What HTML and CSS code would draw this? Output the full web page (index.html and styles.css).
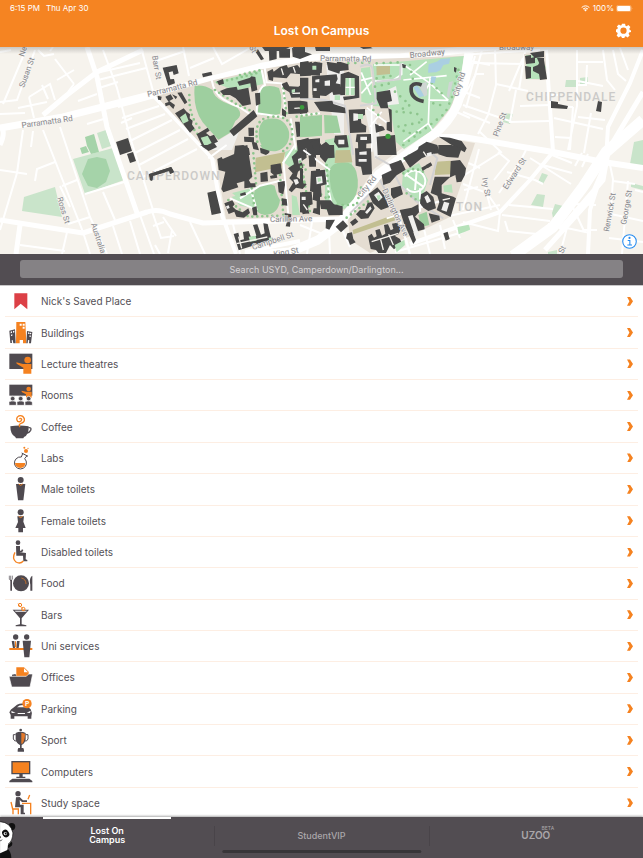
FILE: index.html
```html
<!DOCTYPE html>
<html lang="en">
<head>
<meta charset="utf-8">
<meta name="viewport" content="width=device-width, initial-scale=1">
<title>Lost On Campus</title>
<link rel="stylesheet" href="styles.css">
</head>
<body>
<header class="header">
  <div class="status">
    <span>6:15 PM</span><span>Thu Apr 30</span>
    <svg class="wifi" viewBox="0 0 27 20" aria-hidden="true"><path d="M2 7Q13.500-3 25 7M6 11.500Q13.500 5 21 11.500" fill="none" stroke="#fff" stroke-width="3"/><path d="M9 14Q13.500 10 18 14L13.500 19Z" fill="#fff"/></svg>
    <span>100%</span>
    <svg class="battery" viewBox="0 0 48 20" aria-hidden="true"><rect x="1" y="1" width="42" height="18" rx="5" fill="none" stroke="#fbc796" stroke-width="1.500"/><rect x="3" y="3" width="38" height="14" rx="3" fill="#fff"/><path d="M45 7q3 3 0 6z" fill="#fbc796"/></svg>
  </div>
  <div class="titlebar">
    <h1>Lost On Campus</h1>
    <button class="gear" aria-label="Settings"><svg viewBox="0 0 24 24"><path fill="#fff" fill-rule="evenodd" d="M9.500 1h5l.7 3.200 1.800.8 2.800-1.800 3.200 3.300-1.700 2.800.8 1.900L24 12v2.500l-3 .7-.8 1.900 1.600 2.700-3.300 3.200-2.700-1.700-1.800.8-.6 1.900h-3.900l-.7-2-1.800-.7-2.800 1.700L1 19.800l1.700-2.800-.8-1.900-1.900-.6V10.200l2.200-.7.8-1.900L1.300 5.700l3.300-3.400 2.500 1.800 1.700-.7zM12 7.300a5 5 0 1 0 0 10 5 5 0 0 0 0-10z"/></svg></button>
  </div>
</header>

<section class="map" aria-label="Campus map">
<svg class="map-art" viewBox="0 47 643 207" preserveAspectRatio="xMidYMid slice">
  <defs><linearGradient id="fade" x1="0" y1="0" x2="0" y2="1"><stop offset="0" stop-color="#555" stop-opacity=".28"/><stop offset="1" stop-color="#555" stop-opacity="0"/></linearGradient></defs>
  <rect y="47" width="643" height="207" fill="#f6f3ed"/>
  <!-- parks west and east -->
  <g fill="#c9e4ca">
    <path d="M73 159L113 148 124 180 85 194ZM97 133L106 130 111 146 102 149ZM24 197L55 187 62 217 22 211Z"/>
    <path d="M566 80h11v7h-12zM580 78l8-1v7h-8zM505 113l8 1-3 10-7-2zM542 173l6 2-5 9-5-2zM537 194l8 1-2 12-12-2zM555 204l8 2-10 12-1-5zM634 142l9-2v28l-13-4zM631 183l12 3v4l-12-3zM463 227l6-2 1 4-7 3zM548 252l9-2 0 4h-9z"/>
  </g>
  <path d="M88 159l9-2 9 2 4 12-4 11-9 6-9-2-6-12zM85 137l9-3 5 18-8 2-4-8zM80 148l6-2 3 6-7 2z" fill="#a5d3a9"/>
  <!-- minor streets -->
  <g fill="none" stroke="#fff" stroke-width="2">
    <path d="M35 50L17 100 0 102M27 47L3 104M0 114L25 113M55 59L74 84M57 80L74 70M74 84L68 92M29 97L50 84 55 100M29 97L34 118M18 108L47 102M42 85L48 99M0 52L11 50M50 51L53 47M38 50L44 56 54 54"/>
    <path d="M96 73L140 63M98 80L146 68M99 88L118 82M78 101L97 94M87 124L107 118M103 50L117 88 130 137 153 210M142 51L153 91M183 47L189 76M153 62L185 51M190 68L214 58M213 47L222 64 250 48M118 107L155 97M122 118L159 106M126 129L165 114M130 141L172 120M135 153L180 130M139 165L188 139M143 177L197 149M121 123L132 118"/>
    <path d="M43 130L83 232 90 254M60 127L90 217 107 254M23 130L17 173 0 230M0 170L27 174M35 181L37 169 55 162M62 186L77 180M85 194L124 182M33 131L31 147M68 224L90 217M103 192L115 220M113 226L122 254M130 221L140 254M68 228L62 254M20 245L65 251M60 186L70 207M140 215L154 254M152 211L161 238 174 236M163 217L176 236M153 226L164 222M168 253L172 230M190 222L205 254M155 245L160 254M233 224L240 254"/>
    <path d="M461 80L473 54 540 50M495 47L496 85 488 115 478 134M473 63L528 64M484 74L476 74 463 98M496 84L528 91M509 91L523 58M516 90L510 122 549 121M463 105L510 121M520 106L550 105M525 52L519 90M577 50L577 106 568 150M576 62L603 62M587 65L586 85 577 85M573 107L552 106M603 50L607 80 615 90M613 50L618 74 626 81M620 48L628 70M578 81L603 86M554 118L603 129M573 107L570 150M591 113L584 153M555 137L571 138M546 95L558 95M578 117L605 120M498 152L509 161 494 180M480 132L501 152 463 176M526 150L521 160 499 193M463 184L487 193 500 212M483 178L491 210M507 172L535 180 543 184M530 158L571 184M539 164L572 173M500 212L498 231 463 222M502 215L550 221M509 205L553 209M505 221L508 231 537 234M552 155L572 163M582 153L575 166M588 154L582 167M598 160L589 170M609 160L613 179 610 225M613 181L635 184M628 181L622 254M611 214L643 221M609 238L643 242M568 224L560 254M548 224L590 233M571 203L584 231M574 204L596 205M583 230L597 230M635 190L643 192"/>
    <path d="M475 56L466 90M482 50L466 108M463 112L490 123M479 149L463 210M466 162L480 168M478 187L464 190M430 220L500 205M405 235L410 254M424 229L430 254M440 225L445 249M453 220L460 238M395 252L463 232M466 60L490 65M459 90L480 98M452 110L470 118M300 225L325 235M312 222L307 254M329 229L330 254M342 229L350 247"/>
  </g>
  <!-- main roads -->
  <g fill="none" stroke="#fff" stroke-linejoin="round">
    <path stroke-width="5" d="M87 47L97 77 107 127 137 213M0 220L83 233 147 212Q158 208 170 214L203 223 345 219M0 145Q6 132 1 127M143 50L97 72 67 95 43 115M20 225L16 254"/>
    <path stroke-width="7" d="M0 128L63 117 150 95 213 79 263 66 320 57 400 57 480 48 520 45"/>
    <path stroke-width="4" d="M150 92L212 158 222 215 236 254M245 252L300 241M546 50L553 152 530 180 500 212 463 225 410 244M643 50L630 83 608 127 606 160 590 210 588 254"/>
    <path stroke-width="6" d="M433 137L463 137 553 152 603 162 643 168"/>
    <path stroke-width="11" d="M643 120L606 152 583 187 553 227 513 256"/>
    <path stroke-width="5" d="M643 92L607 152M606 163L590 200 545 250M608 152L603 180 560 230"/>
  </g>
  <!-- campus grounds -->
  <path fill="#e5ddd2" d="M156 96L214 80 263 69 310 61 463 56Q461 85 451 108L432 131 401 149 374 169 344 216 226 219 216 160Z"/>
  <path fill="#e5ddd2" d="M348 219L381 176 404 157 437 137 475 143 450 217 408 237 387 246 370 253 350 240Z"/>
  <path fill="#b7e2ba" d="M214 82L262 70 263 84 235 91ZM373 64L464 56Q460 86 450 108L431 131 404 149 396 142 390 107 373 106ZM232 193l20-5 8 22-15-6zM285 152l18-8-8 22-10-3zM325 140l25-5 5 73-30 2zM403 171l16-8 9 17-8 24-18-18z"/>
  <g fill="#f0efed"><path d="M203 150L232 132 242 124 232 150ZM381 93l15-7 3 18-17 2zM326 65l18 0v70l-10-1zM365 110l9 0 9 43-8 6z"/></g>
  <!-- City Road -->
  <path fill="none" stroke="#fff" stroke-width="9" stroke-linejoin="round" d="M469 52Q466 82 457 105 449 123 433 135L407 154 379 174 338 225 318 240 290 252 245 256"/>
  <!-- campus sector, north-west -->
  <g transform="translate(140 45) scale(.33333)">
    <path fill="#9ecf9f" d="M164 123Q190 118 218 135 220 155 250 170L292 188Q312 210 286 228L270 263 235 284Q205 252 188 232 158 190 164 123ZM360 130Q388 116 417 129 430 162 420 206 385 218 352 207 360 160 360 130ZM373 225Q430 208 447 260 452 304 410 318 366 323 357 280 352 240 373 225ZM482 222L540 214V272L483 276Z"/>
    <path fill="none" stroke="#fff" stroke-width="6" d="M215 105Q222 145 250 163 275 178 300 187L345 218M365 75L375 120Q350 130 350 205L430 216Q440 170 425 115L380 112 374 68M452 220L468 318M480 210L540 205"/>
    <path fill="none" stroke="#8dc58d" stroke-width="8" stroke-linecap="round" stroke-dasharray="0 15" d="M148 150Q146 215 180 250M200 275L175 270 120 200M232 112L290 100 360 82M225 135L290 178 340 200M352 290Q340 225 385 217 450 205 457 260 458 310 420 322M430 130L440 210M470 215L535 205M300 90L362 75"/>
    <path fill="#484848" d="M68 68L110 60 116 85 101 90 98 79 86 82 91 103 102 102 105 115 85 122ZM186 86L214 80 217 90 189 97ZM345 18L354 13 372 42 363 46ZM386 4L410 5 410 42 388 47ZM417 10L450 12 450 38 418 38ZM456 8L516 28 480 42 458 35ZM268 258L341 195 352 214 281 274ZM53 152L65 155 63 165 54 164ZM76 155L92 148 100 161 88 168 105 180 100 192 88 180 77 184 75 175 86 171ZM96 148L112 155 107 163ZM112 143L125 142 142 172 134 178ZM105 205L131 190 140 200 150 208 149 220 158 227 156 239 164 250 150 263ZM170 268L203 248 209 257 198 264 210 274 222 269 234 290 223 295 231 306 206 318 188 306ZM231 109L249 102 252 116 237 121ZM240 138L260 130 290 125 293 135 325 128 333 178 308 183 287 160 270 150 250 150ZM292 110L330 98 334 94 346 96 352 135 335 140 331 115 298 122ZM345 145L360 143 361 177 348 182ZM382 80L398 72 401 80 420 66 440 60 444 68 472 60 483 72 504 66 505 80 484 88 452 85 440 100 400 97 399 108 386 104ZM490 56L515 50 519 58 540 53V92L512 91ZM425 117L441 110 448 124 475 125 490 115 501 118 500 157 454 158 448 142 432 132ZM517 100H540V160L518 158ZM443 168L482 167 500 171 502 205 445 207ZM465 230H479L484 274 470 276ZM325 248H342V272L326 274ZM312 275L342 277V292L313 290ZM285 302L310 300 327 310 330 330H282ZM335 290L350 293 357 316 340 312ZM360 310L390 320 378 330 362 324ZM426 190L438 198 438 216 426 211ZM470 286L540 280V330H474Z"/>
    <path fill="#b7e2ba" d="M120 217L137 205 146 228 129 236ZM182 278L203 272 215 294 194 304ZM455 134l10-2v10l-10 2zM480 134h9v10h-9zM514 64l10-2 2 10-10 2z"/><path fill="#3b9c3b" d="M480 184h12v13h-12z"/>
    <path fill="none" stroke="#f6f3ed" stroke-width="4" d="M457 145L492 144M463 190L492 188M424 70L430 90M460 66L466 83M496 296L498 330M510 301L536 300"/>
  </g>
  <!-- campus sector, north-east -->
  <g transform="translate(300 45) scale(.33333)">
    <path fill="#c2bf91" d="M229 64L270 62V87L230 91Z"/>
    <path fill="#9ecf9f" d="M0 216L66 210 66 272 0 277ZM72 210L111 212 122 263 74 265Z"/>
    <path fill="#b7e2ba" d="M183 70L210 66 222 165 210 178 184 170Z"/>
    <path fill="none" stroke="#fff" stroke-width="5" d="M184 82L212 150M184 145L216 110M183 106L218 98M222 60H305V88L280 105 224 108M305 55L390 115 445 166M330 90L380 50M310 105L440 92M390 95L385 235 310 290M385 165L445 166M385 235L400 260M400 94L375 140M200 188L270 240M210 245L245 200M215 180V320"/>
    <path fill="none" stroke="#d5d4d5" stroke-width="6" d="M180 65Q215 50 218 75L228 175 180 182M0 160L75 165 135 182 160 330M230 110L300 102 302 55"/>
    <path fill="none" stroke="#8dc58d" stroke-width="8" stroke-linecap="round" stroke-dasharray="0 21" d="M285 140L330 180 290 200 350 205 370 230 295 245 320 265 365 260 M310 300L390 240 435 205 455 160 480 55M230 55L300 52M230 100L290 90M225 125L270 115M145 55L210 52M330 60L340 110M395 115L435 155M400 175L440 185M220 195L240 215"/>
    <path fill="#aacfe2" d="M386 58L410 50 423 42 451 40 447 56 430 60 421 76 408 82 384 83ZM394 94L409 95 404 115 391 113ZM340 127L352 122 375 152 358 157Z"/>
    <path fill="#cfd6d3" d="M355 118L380 110 382 150 373 155ZM447 112L459 108 447 160 440 154Z"/>
    <path fill="none" stroke="#484848" stroke-width="11" d="M365 120Q343 111 334 124 328 161 371 169"/>
    <path fill="#484848" d="M178 5H210L218 10 190 12ZM0 52L25 48 28 58 45 50 67 54 65 84 35 86 32 92 0 94ZM80 50L110 55 112 48 145 58 146 75 120 78 118 86 85 75ZM36 94L110 88 113 102 107 115 121 118 122 148 100 150 97 140 78 153 38 150ZM122 88L145 80 177 94 178 158 132 166 129 155 164 152 162 99 137 99 135 150 121 151ZM0 98L25 98V160H0ZM42 171L97 167 100 177 135 188 137 205 60 198ZM0 168L22 170 25 200 0 207ZM230 142L270 135 276 168 262 172 265 190 275 194 276 262 260 255 260 232 270 230 265 190 242 190 230 162ZM146 194L195 192 195 210 182 214 184 235 199 243 198 262 150 264ZM170 268L213 267 214 295 199 296 198 330 175 330 174 292 167 290ZM225 236L250 245 255 255 228 263ZM230 275L285 270 290 330H233ZM105 272L140 270 146 307 115 308 102 290ZM0 286L25 278 30 292 54 284 64 300 78 290 92 303 94 330H25L20 310 0 318ZM416 275L450 278 485 288 500 310 494 322 455 300ZM306 56L318 60 316 70 308 68ZM462 66l8 3-2 14-6-4ZM356 305L380 290 412 300 420 325 350 330Z"/>
    <path fill="#f0efed" d="M160 205l14 1v20l-14 2zM115 284h18v14h-18zM181 275h20v10h-20zM46 104l12-2v10H46zM74 108l16-2v16H74zM40 130h10v8H40zM236 235l8 2v6h-8z"/>
    <path fill="#b7e2ba" d="M137 99L164 99 164 150 137 151ZM37 62h12v12H37zM104 151h16v14h-16zM174 207h15v15h-15z"/><path fill="none" stroke="#fff" stroke-width="4" d="M137 127H164M150 99V150"/><circle cx="264" cy="274" r="8" fill="#3b9c3b"/><circle cx="6" cy="187" r="7" fill="#3b9c3b"/>
    <path fill="#c2bf91" d="M108 322L148 318V330H106Z"/>
  </g>
  <!-- campus sector, south-west -->
  <g transform="translate(140 145) scale(.33333)">
    <path fill="#9ecf9f" d="M360 0H435Q410 24 370 16ZM345 125Q380 110 404 122 410 150 420 165 416 207 375 210 340 205 340 165Z"/>
    <path fill="#b7e2ba" d="M435 55L470 10 460 75ZM455 150L470 155 480 210H457ZM275 155L330 145 345 190 300 182Z"/>
    <path fill="#c2bf91" d="M347 38L436 21 425 65 345 82Z"/>
    <path fill="none" stroke="#fff" stroke-width="6" d="M330 125L350 195M300 160L360 122 430 105M270 160L340 190M430 50L445 210M428 55L465 0M205 40L260 0"/>
    <path fill="none" stroke="#8dc58d" stroke-width="8" stroke-linecap="round" stroke-dasharray="0 15" d="M340 25L348 115M420 90L430 210M265 165L325 215 425 212M335 130L345 200M490 95L510 200M470 20L500 80"/>
    <path fill="#484848" d="M26 88L94 66 103 82 91 86 88 78 40 92 38 106 30 106ZM232 42L245 36 248 42 288 25 285 10 322 0 337 95 328 104 290 115 295 127 250 142 244 132 256 80 236 75ZM180 0H222L208 14ZM202 143L227 137 243 204 215 210ZM313 108L326 104 332 115 346 115 347 126 313 130ZM392 60L422 55 427 85 402 91 392 82ZM361 84L382 80 384 109 362 111ZM360 8L388 17 384 27 366 22ZM390 93L410 88 412 98 392 101ZM413 112L434 108 435 120 430 148 416 142ZM425 160L440 162 442 182 426 180ZM253 175L277 166 284 178 278 185 288 194 308 202 325 190 330 204 312 218 289 215 283 200 266 207ZM336 188L350 184 352 211 340 211ZM300 146l16-5 2 9-16 3zM434 204L454 208 450 245 437 244 441 230 435 222ZM281 267L295 263 300 286 312 283 309 261 326 258 333 277 349 272 339 240 352 238 363 269 374 265 370 235 383 237 391 270 395 284 296 316ZM444 70L462 58 455 35 470 22 478 10 498 12 500 38 485 48 490 68 474 80 470 95 500 118 488 132 468 128 455 142 446 135 460 112 448 100 458 85ZM506 30L528 27V65L508 65ZM518 0H540V30L520 18ZM485 142L515 140 518 178 505 182 504 205 488 208 480 170ZM528 72H540V210L518 203 521 190 530 190 530 168 518 164 520 142 532 140ZM310 92l24-2v10l-24 3z"/>
    <path fill="#f0efed" d="M460 104l12-2 5 12-10 6zM494 154h12v13h-12zM474 42l10-4 2 14-10 4zM258 184l8-3 3 8-8 3z"/>
    <path fill="#b7e2ba" d="M326 275L347 272 350 287 330 290ZM386 278l10-1 2 11-10 2z"/>
    <path fill="none" stroke="#f6f3ed" stroke-width="4" d="M290 296L382 276M296 275L305 310"/>
  </g>
  <!-- campus sector, south-east -->
  <g transform="translate(300 145) scale(.33333)">
    <path fill="#9ecf9f" d="M90 72Q98 54 125 52 158 48 169 80 182 130 160 163 142 187 113 178 84 135 90 72ZM355 210L380 200 388 240 363 246Z"/>
    <path fill="#c2bf91" d="M107 16L150 15 157 52 104 54ZM158 255L285 208 288 225 160 268ZM408 50L452 47 453 88 404 90Z"/>
    <path fill="none" stroke="#d2d1d2" stroke-width="6" d="M225 35L270 60 300 120 350 170 430 220M380 10L412 40 390 120M240 105L300 220M150 205L210 145"/>
    <path fill="none" stroke="#fff" stroke-width="6" d="M315 95A32 32 0 1 1 320 130M320 90L370 125M350 78L345 135M360 130L360 200M260 220L430 165M300 225L330 330M10 15L90 75M75 80L95 180"/>
    <path fill="none" stroke="#8dc58d" stroke-width="8" stroke-linecap="round" stroke-dasharray="0 16" d="M80 60L88 180 170 180 185 120M140 218L210 165M310 85L345 70 380 85M320 145L350 165 390 170M0 50L15 120M50 140L80 160M300 50L330 30"/>
    <path fill="#484848" d="M26 32L43 28 47 62 29 64ZM60 0H102L104 38 84 40 76 53 60 36ZM165 10H213L216 88 188 90 183 65 167 62ZM33 78L75 74 80 118 63 122 65 155 42 158 40 142 30 138ZM0 142L28 145 30 170 20 175 28 206 0 202ZM58 166H92L102 178 128 184V210L86 211 80 193 63 192ZM0 72H9V125L0 128ZM78 225L105 224 88 254 77 250ZM107 245L129 226 144 243 123 262ZM150 232L166 220 175 230 158 243ZM168 208L180 195 195 196 203 173 216 172 224 190 205 220 183 222ZM206 147L232 127 254 153 267 186 243 195 218 174ZM245 90L275 76 268 58 303 45 317 74 290 91 270 113 250 120ZM273 130L302 122 309 148 280 162 273 150ZM310 38L350 16 370 0 400 0 405 24 365 40 330 68ZM415 0H455L485 10 475 38 440 36 415 28ZM404 95L450 95 452 48 480 45 498 70 495 90 484 110 470 112 466 90 448 98 425 120 425 145 460 155 468 160 452 216 432 206 410 195 418 172 412 152 392 144ZM363 148L380 138 400 156 408 190 385 198 370 188 360 175ZM299 195L335 188 355 178 357 202 345 215 372 238 374 253 340 262 348 285 340 297 312 235ZM142 265L156 262 160 282 167 292 150 300 145 286 138 280ZM204 274L215 266 222 278 230 274 226 256 239 252 246 272 256 266 252 240 264 238 272 256 280 252 276 236 292 233 303 252 295 268 284 272 300 282 305 295 282 313 270 300 258 324 235 324 228 315 212 312ZM430 265L443 260 449 282 437 287ZM386 205L418 212 420 224 395 233ZM364 68l15-8 4 8-15 10zM378 60l14-8 5 9-14 9z"/>
    <path fill="#f0efed" d="M178 21l22-2v10h-22zM176 42h24v8h-24zM48 96l18-2 2 20-18 4zM222 150l14-10 12 17-12 12zM195 202l16-18 4 7-14 16zM373 156l10-7 10 20-12 6zM380 25l14-4 2 10-14 4zM324 214l14-4 20 60-12 6zM432 170l16 4-8 26-16-5zM5 155h12v10H5z"/>
    <path fill="#b7e2ba" d="M52 100l10-2 2 10-10 3zM230 152l9-2 3 12-8 3zM430 122L455 118 458 143 432 140ZM284 300L313 285 315 300 290 322ZM472 246L506 239 510 254 476 268Z"/>
    <path fill="none" stroke="#f6f3ed" stroke-width="4" d="M215 290L295 265M242 284L250 315M266 268L280 300M10 178L22 195M370 20L380 35M428 165L450 160"/>
  </g>
  <!-- outlying buildings -->
  <g fill="#484848">
    <path d="M116 142L128 138 132 151 120 155ZM127 154L133 152 136 161 130 163ZM551 101L558 102 558 104 568 106 567 109 551 108ZM598 101L602 102 601 112 596 111ZM262 47h28l-8 4h-17zM293 47h12v5h-11zM315 47h15v4h-14z"/>
  </g>
  <path fill="#e5ddd2" d="M524 54L545 51 547 80 525 79Z"/><path fill="#b7e2ba" d="M526 55h12l8 12-5 12h-14z"/>
  <path fill="#484848" d="M525 56l6-1v3l4-1v6l-9 1zM530 53l14-2v6l-9 1zM525 66l6 1v11l-5 1zM533 67l5-2 3-5h3l3 19-7 1-1-6-6-3zM537 58h7v7h-4z"/>
  <g class="road">
    <text transform="translate(24 57) rotate(-72)">New</text><text transform="translate(24 88) rotate(-70)">Susan St</text><text transform="translate(22 128) rotate(-8)">Parramatta Rd</text>
    <text transform="translate(152 56) rotate(80)">Barr St</text><text transform="translate(148 97) rotate(-14)">Parramatta Rd</text><text transform="translate(249 47) rotate(62)">St</text><text transform="translate(320 61) rotate(1)">Parramatta Rd</text><text transform="translate(410 58) rotate(-6)">Broadway</text><text x="499" y="50">Broadway</text>
    <text transform="translate(458 97) rotate(-73)">City Rd</text><text transform="translate(361 198) rotate(-51)">City Rd</text><text transform="translate(382 190) rotate(65)">Darlington Ave</text><text transform="translate(270 222) rotate(-1)">Carillon Ave</text><text transform="translate(253 250) rotate(-18)">Campbell St</text><text transform="translate(274 257) rotate(-10)">King St</text>
    <text transform="translate(57 198) rotate(73)">Ross St</text><text transform="translate(91 224) rotate(72)">Australia St</text><text transform="translate(498 137) rotate(-70)">Pine St</text><text transform="translate(507 190) rotate(-57)">Edward St</text><text transform="translate(482 178) rotate(80)">Ivy St</text><text transform="translate(609 232) rotate(-80)">Renwick St</text><text transform="translate(626 225) rotate(-80)">George St</text><text transform="translate(563 254) rotate(-65)">St</text>
  </g>
  <g class="suburb"><text x="127" y="180">CAMPERDOWN</text><text x="526" y="101">CHIPPENDALE</text><text x="456" y="211">TON</text></g>
  <path fill="#484848" d="M149 174L171 167 174 172 170 174 169 171 153 176 152 181 150 180Z"/>
  <rect y="47" width="643" height="7" fill="url(#fade)"/>
</svg>
<button class="info" aria-label="Map information"><svg viewBox="0 0 42 42"><circle cx="21" cy="21" r="19" fill="#fff" stroke="#258bf0" stroke-width="3"/><circle cx="21" cy="11" r="3" fill="#258bf0"/><path d="M16 18h6v13M15 31h13" fill="none" stroke="#258bf0" stroke-width="3"/></svg></button>
</section>

<form class="search"><input type="search" aria-label="Search campus" placeholder="Search USYD, Camperdown/Darlington..."></form>

<main class="places">
<a href="#"><svg class="icon" viewBox="0 0 72 72"><path fill="#dc4046" d="M16 13H55V61L35 44 16 61Z"/></svg><span>Nick's Saved Place</span><i></i></a>
<a href="#"><svg class="icon" viewBox="0 0 72 72"><path class="o" d="M22 3H49L52 67H42V57H32V67H21Z"/><path class="d" d="M1 29L18 25 20 67H13L11 57 8 58 9 66H4ZM54 30L70 33 66 67H60L61 58 57 57 56 67H52Z"/><path fill="#fff" d="M32 8h6v6h-6zM41 8h6v6h-6zM41 17h6v6h-6zM5 32l4-1v5l-4 1zM12 30l4-1v5l-4 1zM6 41l4-1v4l-4 1zM57 34l4 1v4l-4-1zM63 35l4 1-1 4-4-1zM62 43l4 1-1 4-4-1z"/></svg><span>Buildings</span><i></i></a>
<a href="#"><svg class="icon" viewBox="0 0 72 72"><path class="d" d="M1 5H70V51H1Z"/><circle class="o" cx="56" cy="24" r="10"/><path class="o" d="M22 31L42 36H67V65H43V47L23 35Z"/></svg><span>Lecture theatres</span><i></i></a>
<a href="#"><svg class="icon" viewBox="0 0 72 72"><path class="d" d="M1 5H70V38H1Z"/><circle class="o" cx="59" cy="18" r="7"/><path class="o" d="M38 23L51 26H68V44H51V34L38 27Z"/><g class="d" stroke="#fff" stroke-width="2"><circle cx="11" cy="47" r="7"/><circle cx="35" cy="47" r="7"/><circle cx="59" cy="47" r="7"/><path d="M0 66V58Q2 54 8 54h7q6 1 7 5v8H0zM24 66V58Q26 54 32 54h7q6 1 7 5v8H24zM48 66V58Q50 54 56 54h7q6 1 7 5v8H48z"/></g></svg><span>Rooms</span><i></i></a>
<a href="#"><svg class="icon" viewBox="0 0 72 72"><path class="d" d="M4 34Q31 29 59 34 60 60 45 66L43 70H21L19 66Q4 59 4 34Z"/><path class="ds" stroke-width="4" d="M58 38Q69 37 65 46 61 53 54 54"/><path class="os" stroke-width="4" d="M33 36Q27 29 36 25 48 22 46 11 41-1 29 3 19 9 26 19 36 23 38 13 35 8 31 12"/></svg><span>Coffee</span><i></i></a>
<a href="#"><svg class="icon" viewBox="0 0 72 72"><path class="ds" stroke-width="3" d="M41 23L37 33A18 18 0 1 0 47 38L54 29M38 21L57 31"/><path class="o" d="M18 51H49Q49 64 34 66 19 65 18 51Z"/><circle class="o" cx="51" cy="15" r="6"/><circle class="o" cx="46" cy="5" r="3"/><circle class="o" cx="57" cy="7" r="2"/></svg><span>Labs</span><i></i></a>
<a href="#"><svg class="icon" viewBox="0 0 72 72"><circle class="d" cx="35" cy="9" r="9"/><path class="d" d="M21 21H49L43 70H27Z"/><path class="os" stroke-width="3" d="M29 21l6 4 6-4"/></svg><span>Male toilets</span><i></i></a>
<a href="#"><svg class="icon" viewBox="0 0 72 72"><circle class="d" cx="35" cy="10" r="9"/><path class="d" d="M25 22H45L43 38 50 57H42V70H28V57H19L27 39Z"/><path class="os" stroke-width="3" d="M29 22l6 4 6-4"/></svg><span>Female toilets</span><i></i></a>
<a href="#"><svg class="icon" viewBox="0 0 72 72"><circle class="d" cx="27" cy="8" r="7"/><path class="ds" stroke-width="5" d="M41 29L38 34 26 35"/><path class="d" d="M21 18H33V37L51 39 50 58 55 60V64H43L42 47H22Z"/><path class="os" stroke-width="4" d="M18 37Q8 55 21 66 34 73 43 63"/></svg><span>Disabled toilets</span><i></i></a>
<a href="#"><svg class="icon" viewBox="0 0 72 72"><circle class="d" cx="36" cy="37" r="24"/><path class="os" stroke-width="2" d="M37 21Q51 24 51 39"/><path class="ds" stroke-width="2" d="M1 14V25Q6 33 10 25V14M5 14V29"/><path class="d" d="M4 27h5v32H4zM63 36Q61 19 70 14V59H64V41Z"/></svg><span>Food</span><i></i></a>
<a href="#"><svg class="icon" viewBox="0 0 72 72"><path class="d" d="M11 20H60L38 46V64L52 67V70H20V67L33 64V46Z"/><path fill="#fff" d="M17 23H54L51 26H20Z"/><circle class="os" stroke-width="3" cx="33" cy="6" r="5"/><circle class="os" stroke-width="3" cx="43" cy="18" r="5"/><path class="os" stroke-width="2" d="M27 2L46 24"/></svg><span>Bars</span><i></i></a>
<a href="#"><svg class="icon" viewBox="0 0 72 72"><circle class="d" cx="20" cy="9" r="8"/><circle class="d" cx="53" cy="9" r="8"/><path class="d" d="M8 21H32L29 43H12Z"/><path fill="#fff" d="M16 21h8l-2 21h-4z"/><path class="o" d="M18 22h3l2 18h-5zM1 42h69v6H1z"/><path class="d" d="M41 20H66L61 70H46Z"/></svg><span>Uni services</span><i></i></a>
<a href="#"><svg class="icon" viewBox="0 0 72 72"><path class="d" d="M9 29L19 27 23 33H63V59H9Z"/><path class="o" d="M22 7H45L59 20V38H22Z"/><path fill="#fff" d="M45 10L57 22H45Z"/><path class="d" stroke="#fff" stroke-width="2" d="M0 34H52L59 27H71L63 66H8Z"/></svg><span>Offices</span><i></i></a>
<a href="#"><svg class="icon" viewBox="0 0 72 72"><path class="d" d="M1 46Q5 35 13 32L24 23Q33 19 43 20L44 24Q32 23 24 31H58L65 37Q71 47 67 59V65H56V58H16V65H5V54Z"/><path fill="#fff" d="M7 42l13 5-12 1zM53 47l12-6-2 7zM26 48h22v3H26z"/><circle class="o" cx="54" cy="20" r="14"/><text x="48" y="28" class="parking-letter">P</text></svg><span>Parking</span><i></i></a>
<a href="#"><svg class="icon" viewBox="0 0 72 72"><circle class="d" cx="35" cy="6" r="4"/><path class="d" d="M20 15Q35 7 50 15V34Q48 46 38 51V60H43L45 66V71H26V65L28 60H33V51Q22 46 20 34Z"/><path fill="#e3792b" d="M37 14L48 17Q48 36 40 47H37Z"/><path class="ds" stroke-width="3" d="M20 20H13V33Q16 41 24 39M50 20H57V33Q54 41 47 39"/></svg><span>Sport</span><i></i></a>
<a href="#"><svg class="icon" viewBox="0 0 72 72"><path class="d" d="M7 3H64V43H41V50H49V54H22V50H31V43H7Z"/><path class="o" d="M11 7H60V39H11Z"/><path class="d" d="M10 56H61L70 63V67H1V63Z"/></svg><span>Computers</span><i></i></a>
<a href="#"><svg class="icon" viewBox="0 0 72 72"><circle class="d" cx="27" cy="8" r="8"/><path class="d" d="M21 19L32 18 42 28H54V33H39L32 27 33 41H44V65H48V70H35V49H18Z"/><path class="os" stroke-width="4" d="M6 33L11 54H28V70M12 54V70M39 37H65V70M57 25L62 12"/></svg><span>Study space</span><i></i></a>
</main>

<nav class="tabs">
  <a href="#" class="tab active" aria-current="page"><span>Lost On<br>Campus</span></a>
  <a href="#" class="tab"><span>StudentVIP</span></a>
  <a href="#" class="tab"><span class="uzoo">UZOO<small>BETA</small></span></a>
  <svg class="panda" viewBox="0 0 48 118" aria-hidden="true"><circle cx="35" cy="23" r="11" fill="#111"/><path d="M18 82L30 69Q40 68 36 80L26 88Z" fill="#111"/><path d="M0 98L20 88Q34 98 34 118H0Z" fill="#111"/><path d="M0 8Q32 10 39 42 38 68 24 78L22 94 0 104Z" fill="#fff"/><path d="M0 8Q32 10 39 42 38 68 24 76" fill="none" stroke="#111" stroke-width="2"/><ellipse cx="17" cy="44" rx="10" ry="12" transform="rotate(-35 17 44)" fill="#111"/><circle cx="16" cy="44" r="5" fill="#fff"/><circle cx="17" cy="44" r="3" fill="#111"/><path d="M0 52q5 2 0 6M0 66q5 0 6-4" fill="none" stroke="#111" stroke-width="2"/></svg>
  <div class="home"></div>
</nav>
</body>
</html>
```
FILE: styles.css
```css
* { box-sizing: border-box; }
body {
  margin: 0;
  min-height: 100vh;
  display: flex;
  flex-direction: column;
  background: #fff;
  color: #545056;
  font-family: Inter, "Liberation Sans", sans-serif;
}
button { border: 0; padding: 0; background: none; cursor: pointer; }
svg { display: block; }
a { color: inherit; text-decoration: none; }

.header { background: #f58422; color: #fff; }
.status {
  display: flex;
  align-items: center;
  gap: 6px;
  height: 16px;
  padding: 0 10px;
  font-size: 8px;
}
.wifi { width: 9px; height: 7px; margin-left: auto; margin-right: -3px; }
.battery { width: 17px; height: 7px; margin-left: -4px; }
.titlebar {
  display: grid;
  grid-template-columns: 1fr auto 1fr;
  align-items: center;
  height: 31px;
  padding: 0 12px 2px;
}
h1 { grid-column: 2; margin: 0; font-size: 12px; line-height: 16px; font-weight: 600; }
.gear { justify-self: end; width: 15px; height: 15px; }

.map { position: relative; overflow: hidden; }
.map-art { width: 100%; height: auto; }
.road text {
  font: 8px Roboto, sans-serif;
  fill: #85858b;
  stroke: #f8f6f2;
  stroke-width: 1px;
  paint-order: stroke;
}
.suburb text { font: 500 12px Roboto, sans-serif; letter-spacing: 1px; fill: #cbcac8; }
.info { position: absolute; right: 6px; bottom: 5px; width: 15px; height: 15px; }

.search { display: flex; height: 31px; padding: 6px 20px 7px; background: #524d52; }
.search input {
  flex: 1;
  min-width: 0;
  border: 0;
  border-radius: 3px;
  background: #858285;
  color: #fff;
  font: 9px Inter, sans-serif;
  text-align: center;
}
.search input::placeholder { color: #d5d3d5; opacity: 1; }

.places {
  flex: 1;
  display: flex;
  flex-direction: column;
  margin-bottom: -2px;
  border-top: 1px solid #c9c8c9;
}
.places a {
  flex: 1 0 31px;
  display: flex;
  align-items: center;
  gap: 8px;
  margin: 0 5px;
  padding: 0 5px 0 4px;
  border-bottom: 1px solid #fdeee3;
  font-size: 10px;
  line-height: 12px;
}
.icon { width: 24px; height: 24px; flex: none; overflow: visible; }
.places i {
  width: 6px;
  height: 9px;
  margin-left: auto;
  background: #f58220;
  clip-path: polygon(0 0, 50% 0, 100% 50%, 50% 100%, 0 100%, 40% 50%);
}
.o { fill: #f58220; }
.d { fill: #4f4a50; }
.os { fill: none; stroke: #f58220; }
.ds { fill: none; stroke: #4f4a50; }
.parking-letter { font: bold 20px Inter, sans-serif; fill: #fff; }

.tabs {
  position: relative;
  display: grid;
  grid-template-columns: repeat(3, 1fr);
  height: 41px;
  background: #524d52;
  color: #aaa7aa;
  box-shadow: 0 -1px 2px #aaa;
}
.tab {
  position: relative;
  display: flex;
  align-items: center;
  justify-content: center;
  padding-bottom: 5px;
  font-size: 9px;
  line-height: 9px;
  font-weight: 500;
  text-align: center;
}
.tab + .tab::after {
  content: "";
  position: absolute;
  left: 0;
  top: 9px;
  width: 1px;
  height: 20px;
  background: #494449;
}
.active { color: #fff; font-weight: 600; }
.active::before {
  content: "";
  position: absolute;
  top: 0;
  left: 20%;
  right: 20%;
  height: 2px;
  background: #fff;
}
.uzoo { position: relative; font-size: 10px; font-weight: 600; }
.uzoo small { position: absolute; left: 70%; top: -6px; font-size: 5px; line-height: 6px; font-weight: 400; }
.panda { position: absolute; left: 0; bottom: 0; width: 16px; height: 39px; }
.home {
  position: absolute;
  left: 50%;
  bottom: 5px;
  width: 31%;
  height: 3px;
  border-radius: 2px;
  background: #383639;
  transform: translateX(-50%);
}
```
